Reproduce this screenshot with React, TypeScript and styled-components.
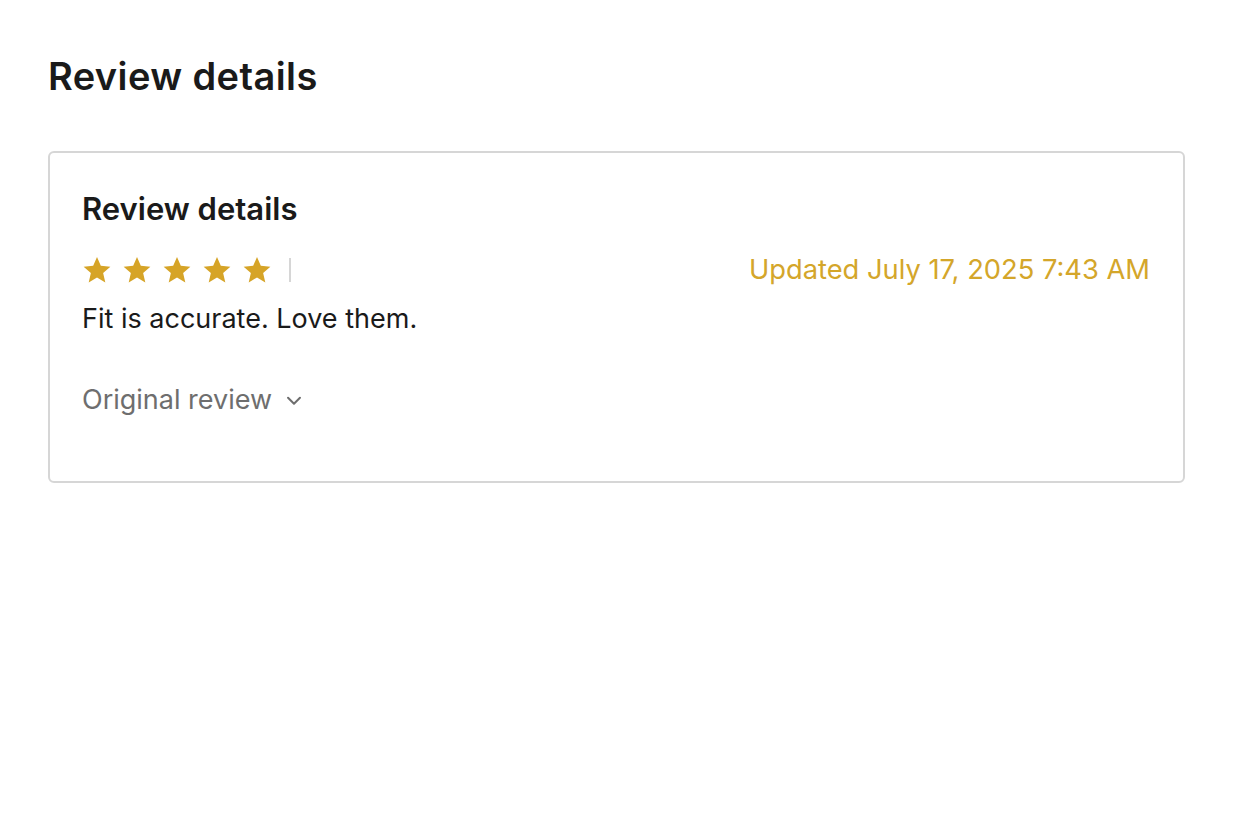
import styled, { createGlobalStyle } from "styled-components";

const GlobalStyle = createGlobalStyle`
  body {
    margin: 0;
    background: #ffffff;
    font-family: Inter, "Noto Sans", sans-serif;
    color: #1a1a1a;
  }
`;

const Page = styled.div`
  padding: 52px 48px 0 48px;
`;

const PageTitle = styled.h1`
  margin: 0 0 51px 0;
  font-size: 38px;
  font-weight: 600;
  line-height: 48px;
  letter-spacing: 0.4px;
`;

const Card = styled.section`
  border: 2px solid #d6d6d6;
  border-radius: 6px;
  padding: 38px 33px 63px 32px;
`;

const CardTitle = styled.h2`
  margin: 0 0 27px 0;
  font-size: 31px;
  font-weight: 600;
  line-height: 36px;
`;

const RatingRow = styled.div`
  display: flex;
  align-items: center;
  justify-content: space-between;
`;

const Stars = styled.div`
  display: flex;
  align-items: center;
  gap: 10px;
`;

const Divider = styled.span`
  width: 2px;
  height: 24px;
  background: #d6d6d6;
  margin-left: 7px;
`;

const Updated = styled.span`
  color: #d4a62a;
  font-size: 27.3px;
  line-height: 32px;
`;

const Body = styled.p`
  margin: 15px 0 0 0;
  font-size: 27px;
  line-height: 36px;
`;

const OriginalToggle = styled.button`
  display: flex;
  align-items: center;
  gap: 11px;
  margin-top: 45px;
  padding: 0;
  border: none;
  background: none;
  font-family: inherit;
  font-size: 27px;
  line-height: 36px;
  color: #6e6e6e;
  cursor: pointer;
`;

const Star = () => (
  <svg width="30" height="30" viewBox="0 0 24 24">
    <path
      d="M12 1.6l3.05 7.05 7.65.7-5.8 5.05 1.75 7.5L12 17.95 5.35 21.9l1.75-7.5-5.8-5.05 7.65-.7z"
      fill="#d6a427"
    />
  </svg>
);

const Chevron = () => (
  <svg width="22" height="22" viewBox="0 0 24 24" fill="none">
    <path
      d="M5.5 9.5l6.5 6.5 6.5-6.5"
      stroke="#6e6e6e"
      strokeWidth="2.2"
      strokeLinecap="round"
      strokeLinejoin="round"
    />
  </svg>
);

const App = () => {
  return (
    <Page>
      <GlobalStyle />
      <PageTitle>Review details</PageTitle>
      <Card>
        <CardTitle>Review details</CardTitle>
        <RatingRow>
          <Stars>
            {[0, 1, 2, 3, 4].map((i) => (
              <Star key={i} />
            ))}
            <Divider />
          </Stars>
          <Updated>Updated July 17, 2025 7:43 AM</Updated>
        </RatingRow>
        <Body>Fit is accurate. Love them.</Body>
        <OriginalToggle>
          Original review
          <Chevron />
        </OriginalToggle>
      </Card>
    </Page>
  );
};

export default App;
